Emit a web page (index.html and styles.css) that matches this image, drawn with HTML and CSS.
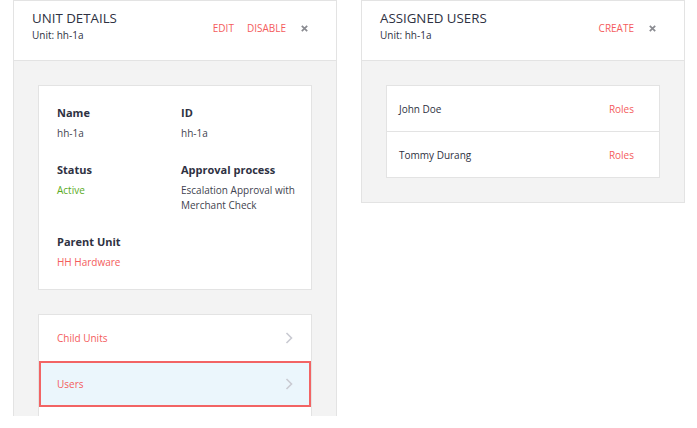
FILE: index.html
```html
<!DOCTYPE html>
<html>
<head>
<meta charset="utf-8">
<link rel="stylesheet" href="styles.css">
</head>
<body>
<div class="page">
  <section class="panel panel-left">
    <header class="panel-head">
      <div class="titles">
        <div class="title">UNIT DETAILS</div>
        <div class="sub">Unit: hh-1a</div>
      </div>
      <div class="actions">
        <a class="act">EDIT</a>
        <a class="act">DISABLE</a>
        <svg class="close" width="7" height="7" viewBox="0 0 7 7"><path d="M0.8 0.8 L6.2 6.2 M6.2 0.8 L0.8 6.2" stroke="#8a8b91" stroke-width="1.7"/></svg>
      </div>
    </header>
    <div class="panel-body">
      <div class="card info">
        <div class="field">
          <div class="label">Name</div>
          <div class="value">hh-1a</div>
        </div>
        <div class="field">
          <div class="label">ID</div>
          <div class="value">hh-1a</div>
        </div>
        <div class="field">
          <div class="label">Status</div>
          <div class="value green">Active</div>
        </div>
        <div class="field">
          <div class="label">Approval process</div>
          <div class="value">Escalation Approval with Merchant Check</div>
        </div>
        <div class="field">
          <div class="label">Parent Unit</div>
          <div class="value red">HH Hardware</div>
        </div>
      </div>
      <div class="card nav">
        <div class="nav-row"><span>Child Units</span><svg class="chev" width="8" height="12" viewBox="0 0 8 12"><path d="M1.5 1 L6.5 6 L1.5 11" fill="none" stroke="#c9cad2" stroke-width="1.6"/></svg></div>
        <div class="nav-row selected"><span>Users</span><svg class="chev" width="8" height="12" viewBox="0 0 8 12"><path d="M1.5 1 L6.5 6 L1.5 11" fill="none" stroke="#c9cad2" stroke-width="1.6"/></svg></div>
        <div class="nav-row"></div>
      </div>
    </div>
  </section>
  <section class="panel panel-right">
    <header class="panel-head">
      <div class="titles">
        <div class="title">ASSIGNED USERS</div>
        <div class="sub">Unit: hh-1a</div>
      </div>
      <div class="actions">
        <a class="act">CREATE</a>
        <svg class="close" width="7" height="7" viewBox="0 0 7 7"><path d="M0.8 0.8 L6.2 6.2 M6.2 0.8 L0.8 6.2" stroke="#8a8b91" stroke-width="1.7"/></svg>
      </div>
    </header>
    <div class="panel-body">
      <div class="card users">
        <div class="user-row"><span>John Doe</span><a class="roles">Roles</a></div>
        <div class="user-row"><span>Tommy Durang</span><a class="roles">Roles</a></div>
      </div>
    </div>
  </section>
</div>
</body>
</html>
```

FILE: styles.css
```css
* { box-sizing: border-box; }
html, body { margin: 0; background: #fff; }
body {
  font-family: "Open Sans", "Liberation Sans", sans-serif;
  color: #2e3142;
}
.page {
  display: flex;
  align-items: flex-start;
  gap: 24px;
  padding-left: 13px;
  height: 416px;
  overflow: hidden;
}
.panel {
  border: 1px solid #e3e3e3;
  background: #f3f3f3;
}
.panel-left { width: 324px; height: 420px; }
.panel-right { width: 324px; }
.panel-head {
  height: 60px;
  background: #fff;
  border-bottom: 1px solid #e3e3e3;
  display: flex;
  justify-content: space-between;
  align-items: flex-start;
  padding: 8px 28px 0 18px;
}
.title {
  font-size: 13.3px;
  line-height: 19px;
  color: #2e3142;
}
.sub {
  font-size: 10px;
  line-height: 14px;
  color: #2e3142;
}
.actions {
  display: flex;
  align-items: center;
  gap: 13px;
  margin-top: 12px;
  line-height: 14px;
}
.act {
  font-size: 10px;
  color: #f45c5c;
  cursor: pointer;
}
.close {
  display: block;
  margin-left: 2px;
}
.panel-body {
  padding: 24px 24px 24px 24px;
}
.card {
  background: #fff;
  border: 1px solid #e3e3e3;
}
.info {
  display: grid;
  grid-template-columns: 124px 1fr;
  row-gap: 20px;
  padding: 19px 8px 19px 18px;
}
.label {
  font-size: 11px;
  line-height: 16px;
  font-weight: bold;
  color: #2e3142;
}
.value {
  margin-top: 5px;
  font-size: 10px;
  line-height: 15.5px;
  color: #3f4350;
}
.green { color: #5aaa22; }
.red { color: #f45c5c; }
.nav { margin-top: 24px; }
.nav-row {
  height: 46px;
  display: flex;
  align-items: center;
  justify-content: space-between;
  padding: 0 16px 0 16px;
  font-size: 10px;
  color: #f45c5c;
  border: 2px solid transparent;
}
.nav-row.selected {
  background: #ebf6fc;
  border-color: #f26464;
}
.users .user-row {
  height: 45px;
  display: flex;
  align-items: center;
  justify-content: space-between;
  padding: 0 25px 0 12px;
  font-size: 10px;
  color: #2e3142;
}
.users .user-row + .user-row { height: 46px; border-top: 1px solid #e3e3e3; }
.roles { color: #f45c5c; }
```
